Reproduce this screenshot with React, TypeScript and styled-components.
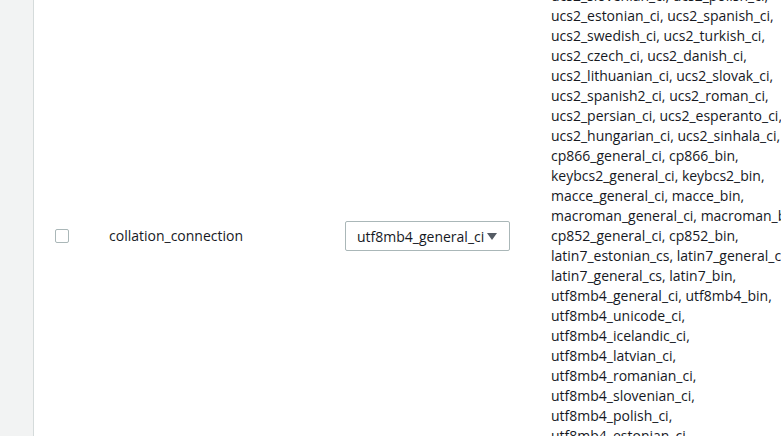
import React from "react";
import styled, { createGlobalStyle } from "styled-components";

const GlobalStyle = createGlobalStyle`
  html, body {
    margin: 0;
    padding: 0;
    background: #ffffff;
    overflow: hidden;
  }
  body {
    font-family: "Open Sans", "Liberation Sans", Arial, sans-serif;
    font-size: 14px;
    color: #16191f;
  }
`;

const Page = styled.div`
  display: flex;
  height: 436px;
  overflow: hidden;
`;

const Sidebar = styled.div`
  width: 33px;
  flex-shrink: 0;
  background: #f2f3f3;
  border-right: 1px solid #d5dbdb;
`;

const Content = styled.div`
  flex: 1;
  overflow: hidden;
`;

// page is scrolled down a bit, the row starts above the viewport
const Row = styled.div`
  display: grid;
  grid-template-columns: 75px 236px 206px 260px;
  align-items: center;
  margin-top: -14px;
`;

const CheckCell = styled.div`
  padding-left: 21px;
  display: flex;
  align-items: center;
`;

const Checkbox = styled.span`
  display: block;
  width: 12px;
  height: 12px;
  border: 1px solid #aab7b8;
  border-radius: 2px;
  background: #fff;
  margin-top: -1px;
`;

const NameCell = styled.div`
  line-height: 20px;
`;

const SelectBox = styled.div`
  width: 165px;
  height: 30px;
  box-sizing: border-box;
  border: 1px solid #aab7b8;
  border-radius: 2px;
  display: flex;
  align-items: center;
  padding: 0 12px 0 11px;
  gap: 3px;
`;

const SelectText = styled.span`
  white-space: nowrap;
`;

const Arrow = styled.svg`
  width: 10px;
  height: 7px;
  flex-shrink: 0;
  fill: #545b64;
`;

const ValuesCell = styled.div`
  line-height: 20px;
`;

const ValueLine = styled.div`
  white-space: nowrap;
`;

const lines = [
  "ucs2_slovenian_ci, ucs2_polish_ci,",
  "ucs2_estonian_ci, ucs2_spanish_ci,",
  "ucs2_swedish_ci, ucs2_turkish_ci,",
  "ucs2_czech_ci, ucs2_danish_ci,",
  "ucs2_lithuanian_ci, ucs2_slovak_ci,",
  "ucs2_spanish2_ci, ucs2_roman_ci,",
  "ucs2_persian_ci, ucs2_esperanto_ci,",
  "ucs2_hungarian_ci, ucs2_sinhala_ci,",
  "cp866_general_ci, cp866_bin,",
  "keybcs2_general_ci, keybcs2_bin,",
  "macce_general_ci, macce_bin,",
  "macroman_general_ci, macroman_bin,",
  "cp852_general_ci, cp852_bin,",
  "latin7_estonian_cs, latin7_general_ci,",
  "latin7_general_cs, latin7_bin,",
  "utf8mb4_general_ci, utf8mb4_bin,",
  "utf8mb4_unicode_ci,",
  "utf8mb4_icelandic_ci,",
  "utf8mb4_latvian_ci,",
  "utf8mb4_romanian_ci,",
  "utf8mb4_slovenian_ci,",
  "utf8mb4_polish_ci,",
  "utf8mb4_estonian_ci,",
  "utf8mb4_spanish_ci,",
  "utf8mb4_swedish_ci,",
];

export default function App() {
  return (
    <>
      <GlobalStyle />
      <Page>
        <Sidebar />
        <Content>
          <Row>
            <CheckCell>
              <Checkbox />
            </CheckCell>
            <NameCell>collation_connection</NameCell>
            <div>
              <SelectBox>
                <SelectText>utf8mb4_general_ci</SelectText>
                <Arrow viewBox="0 0 10 7">
                  <path d="M0 0 H10 L5 7 Z" />
                </Arrow>
              </SelectBox>
            </div>
            <ValuesCell>
              {lines.map((l) => (
                <ValueLine key={l}>{l}</ValueLine>
              ))}
            </ValuesCell>
          </Row>
        </Content>
      </Page>
    </>
  );
}
